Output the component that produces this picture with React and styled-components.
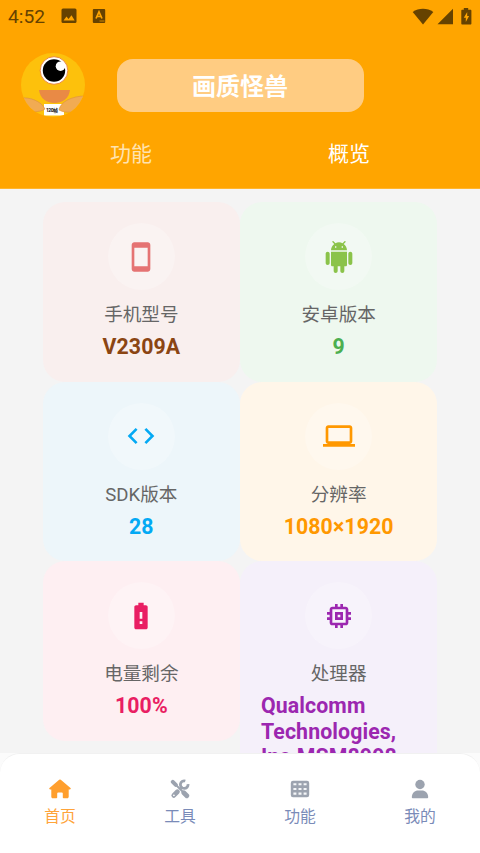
import React from "react";
import styled, { createGlobalStyle } from "styled-components";

const GlobalStyle = createGlobalStyle`
  * {
    box-sizing: border-box;
  }

  body {
    margin: 0;
    font-family: Roboto, "Noto Sans CJK SC", sans-serif;
    background: #f4f4f4;
  }

  svg {
    display: block;
  }
`;

const Screen = styled.div`
  width: 480px;
  height: 853px;
  display: flex;
  flex-direction: column;
  overflow: hidden;
  background: #f4f4f4;
`;

const Header = styled.header`
  height: 189px;
  flex-shrink: 0;
  background: #ffa500;
  border-bottom: 1px solid #ffb52e;
`;

const StatusBar = styled.div`
  height: 32px;
  padding: 0 6px 0 8px;
  display: flex;
  align-items: center;
  justify-content: space-between;
  color: #664200;
`;

const StatusGroup = styled.div`
  display: flex;
  align-items: center;
  gap: ${({ $gap }) => $gap}px;
`;

const Clock = styled.span`
  font-size: 19.2px;
  line-height: 32px;
  padding-top: 1px;
  margin-right: 1px;
`;

const Brand = styled.div`
  height: 106px;
  padding: 21px 0 0 21px;
  display: flex;
  align-items: flex-start;
`;

const TitlePill = styled.h1`
  width: 247px;
  height: 53px;
  margin: 5.5px 0 0 31.5px;
  padding-top: 2px;
  border-radius: 16px;
  background: #ffcc82;
  color: #fff;
  font-size: 24px;
  font-weight: 700;
  line-height: 53px;
  text-align: center;
`;

const TopTabs = styled.div`
  display: flex;
  padding: 1px 22px 0;
`;

const TopTab = styled.div`
  flex: 1;
  font-size: 21px;
  line-height: 30px;
  text-align: center;
  color: ${({ $active }) => ($active ? "#fff" : "#ffe3b0")};
`;

const Content = styled.main`
  flex: 1;
  min-height: 0;
  overflow: hidden;
  padding: 13px 42.7px 0;
`;

const CardGrid = styled.div`
  display: grid;
  width: 394.6px;
  grid-template-columns: 1fr 1fr;
  align-items: start;
`;

const Card = styled.section`
  min-height: 179.6px;
  padding: 21px 21px 19px;
  border-radius: 22px;
  display: flex;
  flex-direction: column;
  align-items: center;
  background: ${({ $bg }) => $bg};
`;

const IconCircle = styled.div`
  width: 67px;
  height: 67px;
  border-radius: 50%;
  background: rgba(255, 255, 255, 0.24);
  display: flex;
  align-items: center;
  justify-content: center;
  color: ${({ $color }) => $color};
`;

const CardLabel = styled.div`
  margin-top: 11px;
  font-size: 18.6px;
  line-height: 28px;
  color: #666;
`;

const CardValue = styled.div`
  margin-top: 5px;
  font-size: 21.3px;
  font-weight: 700;
  line-height: 25.6px;
  letter-spacing: 0.1px;
  color: ${({ $color }) => $color};
`;

const NavBack = styled.div`
  background: #fbfbfb;
`;

const BottomNav = styled.nav`
  height: 100px;
  flex-shrink: 0;
  display: flex;
  background: #fff;
  border-top: 1px solid #f1f1f1;
  border-radius: 20px 20px 0 0;
`;

const NavItem = styled.div`
  flex: 1;
  display: flex;
  flex-direction: column;
  align-items: center;
  padding-top: 25px;
  color: ${({ $active }) => ($active ? "#ff9f2e" : "#9ca3af")};
`;

const NavLabel = styled.span`
  margin-top: 7px;
  font-size: 15.8px;
  line-height: 22px;
  color: ${({ $active }) => ($active ? "#ffa43a" : "#7a8bb8")};
`;

const paths = {
  phone:
    "M17 1.01L7 1c-1.1 0-1.99.9-1.99 2v18c0 1.1.89 2 1.99 2h10c1.1 0 2-.9 2-2V3c0-1.1-.9-1.99-2-1.99zM17 19H7V5h10v14z",
  android:
    "M6 18c0 .55.45 1 1 1h1v3.5c0 .83.67 1.5 1.5 1.5s1.5-.67 1.5-1.5V19h2v3.5c0 .83.67 1.5 1.5 1.5s1.5-.67 1.5-1.5V19h1c.55 0 1-.45 1-1V8H6v10zM3.5 8C2.67 8 2 8.67 2 9.5v7c0 .83.67 1.5 1.5 1.5S5 17.33 5 16.5v-7C5 8.67 4.33 8 3.5 8zm17 0c-.83 0-1.5.67-1.5 1.5v7c0 .83.67 1.5 1.5 1.5s1.5-.67 1.5-1.5v-7c0-.83-.67-1.5-1.5-1.5zm-4.97-5.84l1.3-1.3c.2-.2.2-.51 0-.71-.2-.2-.51-.2-.71 0l-1.48 1.48C13.85 1.23 12.95 1 12 1c-.96 0-1.86.23-2.66.63L7.85.15c-.2-.2-.51-.2-.71 0-.2.2-.2.51 0 .71l1.31 1.31C6.97 3.26 6 5.01 6 7h12c0-1.99-.97-3.75-2.47-4.84zM10 5H9V4h1v1zm5 0h-1V4h1v1z",
  code: "M9.4 16.6L4.8 12l4.6-4.6L8 6l-6 6 6 6 1.4-1.4zm5.2 0l4.6-4.6-4.6-4.6L16 6l6 6-6 6-1.4-1.4z",
  laptop:
    "M20 18c1.1 0 2-.9 2-2V6c0-1.1-.9-2-2-2H4c-1.1 0-2 .9-2 2v10c0 1.1.9 2 2 2H0v2h24v-2h-4zM4 6h16v10H4V6z",
  battery:
    "M15.67 4H14V2h-4v2H8.33C7.6 4 7 4.6 7 5.33v15.33C7 21.4 7.6 22 8.33 22h7.33c.74 0 1.34-.6 1.34-1.33V5.33C17 4.6 16.4 4 15.67 4zM13 18h-2v-2h2v2zm0-4h-2V9h2v5z",
  chip: "M15 9H9v6h6V9zm-2 4h-2v-2h2v2zm8-2V9h-2V7c0-1.1-.9-2-2-2h-2V3h-2v2h-2V3H9v2H7c-1.1 0-2 .9-2 2v2H3v2h2v2H3v2h2v2c0 1.1.9 2 2 2h2v2h2v-2h2v2h2v-2h2c1.1 0 2-.9 2-2v-2h2v-2h-2v-2h2zm-4 6H7V7h10v10z",
};

const cards = [
  { icon: "phone", label: "手机型号", value: "V2309A", bg: "#f9efee", iconColor: "#e57373", color: "#8b4513" },
  { icon: "android", label: "安卓版本", value: "9", bg: "#eef8ef", iconColor: "#8bc34a", color: "#4caf50" },
  { icon: "code", label: "SDK版本", value: "28", bg: "#edf6fa", iconColor: "#03a9f4", color: "#03a9f4" },
  { icon: "laptop", label: "分辨率", value: "1080×1920", bg: "#fff6e9", iconColor: "#ff9800", color: "#ff9800" },
  { icon: "battery", label: "电量剩余", value: "100%", bg: "#feeff2", iconColor: "#e91e63", color: "#e91e63" },
  {
    icon: "chip",
    label: "处理器",
    value: "Qualcomm Technologies, Inc.MSM8998",
    bg: "#f5f0fa",
    iconColor: "#9c27b0",
    color: "#9c27b0",
  },
];

const Avatar = () => (
  <svg width="64" height="64" viewBox="0 0 64 64">
    <defs>
      <clipPath id="face">
        <circle cx="32" cy="32" r="32" />
      </clipPath>
    </defs>
    <g clipPath="url(#face)">
      <rect width="64" height="64" fill="#fdc10c" />
      <circle cx="33" cy="17.5" r="13.8" fill="#fff" stroke="#e9803c" strokeWidth="0.9" />
      <circle cx="33" cy="17.5" r="11.2" fill="#000" />
      <circle cx="39.5" cy="13.2" r="4.8" fill="#fff" />
      <path d="M18 37h31c-1 8-7 13-15.5 13S19 45 18 37z" fill="#e98a45" />
      <path d="M23 51h20v11.5H23z" fill="#fff" />
      <path d="M0 45c9-1 20 3 24 11-6 4-15 3-21 0z" fill="#f1ab53" stroke="#dc9140" strokeWidth="0.6" />
      <path d="M38 57c1-8 13-14 26-14l-1 12c-7 4-18 6-25 2z" fill="#f1ab53" stroke="#dc9140" strokeWidth="0.6" />
      <text x="25" y="58.5" fontSize="5" fontWeight="700" textLength="12" fill="#111">
        120帧
      </text>
    </g>
  </svg>
);

const HomeIcon = () => (
  <svg width="22" height="20" viewBox="0 0 22 20" fill="currentColor">
    <path d="M10.2.8a1.2 1.2 0 0 1 1.600 0l9.700 8.100c.6.6.2 1.500-.5 1.500h-1.300v7.400c0 .9-.6 1.500-1.500 1.500h-3.600a.8.8 0 0 1-.8-.8v-4a1 1 0 0 0-1-1H9.200a1 1 0 0 0-1 1v4c0 .5-.3.8-.8.8H3.800c-.9 0-1.500-.6-1.500-1.500v-7.400H1c-.7 0-1.100-.9-.5-1.500z" />
  </svg>
);

const ToolsIcon = () => (
  <svg width="20" height="20" viewBox="0 0 20 20" fill="none" stroke="currentColor" strokeLinecap="round">
    <path d="M2.8 2.800l3 3" strokeWidth="4" />
    <path d="M5.500 5.500l7 7" strokeWidth="1.800" />
    <path d="M13.800 13.800l3 3" strokeWidth="4.800" />
    <path d="M3.800 16.400l3.600-3.600" strokeWidth="4.800" />
    <path d="M10.500 9.700l2-2" strokeWidth="3" strokeLinecap="butt" />
    <path d="M15.300 2A3.800 3.800 0 1 0 18 5.200" strokeWidth="2.800" strokeLinecap="butt" />
    <circle cx="3.900" cy="16.300" r="0.900" fill="#fff" stroke="none" />
  </svg>
);

const TableIcon = () => (
  <svg width="20" height="20" viewBox="0 0 20 20">
    <rect x="0.800" y="1.700" width="18.400" height="16.600" rx="2.200" fill="currentColor" />
    <path
      d="M3.400 4.200h3v2h-3zM8.500 4.200h3v2h-3zM13.600 4.200h3v2h-3zM3.400 8.900h3v2.100h-3zM8.500 8.900h3v2.100h-3zM13.600 8.900h3v2.100h-3zM3.400 13.600h3v2.100h-3zM8.500 13.600h3v2.100h-3zM13.600 13.600h3v2.100h-3z"
      fill="#f4f6f8"
    />
  </svg>
);

const UserIcon = () => (
  <svg width="20" height="20" viewBox="0 0 20 20" fill="currentColor">
    <circle cx="10" cy="5.500" r="4.700" />
    <path d="M1.800 18.300c0-4.200 3-6.800 6.400-6.800h3.600c3.400 0 6.400 2.600 6.400 6.800 0 .6-.3.9-.9.900H2.700c-.6 0-.9-.3-.9-.9z" />
  </svg>
);

const navItems = [
  { label: "首页", icon: <HomeIcon />, active: true },
  { label: "工具", icon: <ToolsIcon /> },
  { label: "功能", icon: <TableIcon /> },
  { label: "我的", icon: <UserIcon /> },
];

const InfoCard = ({ icon, label, value, bg, iconColor, color }) => (
  <Card $bg={bg}>
    <IconCircle $color={iconColor}>
      <svg width="32" height="32" viewBox="0 0 24 24" fill="currentColor">
        <path d={paths[icon]} />
      </svg>
    </IconCircle>
    <CardLabel>{label}</CardLabel>
    <CardValue $color={color}>{value}</CardValue>
  </Card>
);

export default function App() {
  return (
    <Screen>
      <GlobalStyle />
      <Header>
        <StatusBar>
          <StatusGroup $gap={15}>
            <Clock>4:52</Clock>
            <svg width="16" height="16" viewBox="0 0 16 16">
              <rect x="0.5" y="0.5" width="15" height="14.5" rx="1.5" fill="currentColor" />
              <path d="M2.5 12.500l3-4 2 2.400 3-3.700 3.200 5.300z" fill="#ffa500" />
            </svg>
            <svg width="14" height="16" viewBox="0 0 14 16">
              <rect x="0.800" y="1" width="12.400" height="14" rx="1" fill="currentColor" />
              <path d="M4 10.500L7 3.800l3 6.700M5 8.500h4" fill="none" stroke="#ffa500" strokeWidth="1.700" />
              <path d="M7.500 13h5" stroke="#ffa500" strokeWidth="0.700" />
            </svg>
          </StatusGroup>
          <StatusGroup $gap={3}>
            <svg width="22" height="17" viewBox="0 0 22 17" fill="currentColor">
              <path d="M.7 4C6.500-.3 15.500-.3 21.300 4L11 16.500z" />
            </svg>
            <svg width="16" height="17" viewBox="0 0 16 17" fill="currentColor">
              <path d="M16 .8v15.500H.5z" />
            </svg>
            <svg width="18" height="18" viewBox="0 0 18 18">
              <path d="M6.800 1h4.400v1.700h2.200c.6 0 1 .4 1 1v12.800c0 .6-.4 1-1 1H5.300c-.6 0-1-.4-1-1V3.700c0-.6.4-1 1-1h1.500z" fill="currentColor" transform="translate(1)" />
              <path d="M11.200 5l-3.400 5.800h2V15l3.300-6h-1.900z" fill="#ffa500" />
            </svg>
          </StatusGroup>
        </StatusBar>
        <Brand>
          <Avatar />
          <TitlePill>画质怪兽</TitlePill>
        </Brand>
        <TopTabs>
          <TopTab>功能</TopTab>
          <TopTab $active>概览</TopTab>
        </TopTabs>
      </Header>
      <Content>
        <CardGrid>
          {cards.map((card) => (
            <InfoCard key={card.icon} {...card} />
          ))}
        </CardGrid>
      </Content>
      <NavBack>
        <BottomNav>
          {navItems.map(({ label, icon, active }, index) => (
            <NavItem key={index} $active={active}>
              {icon}
              <NavLabel $active={active}>{label}</NavLabel>
            </NavItem>
          ))}
        </BottomNav>
      </NavBack>
    </Screen>
  );
}
